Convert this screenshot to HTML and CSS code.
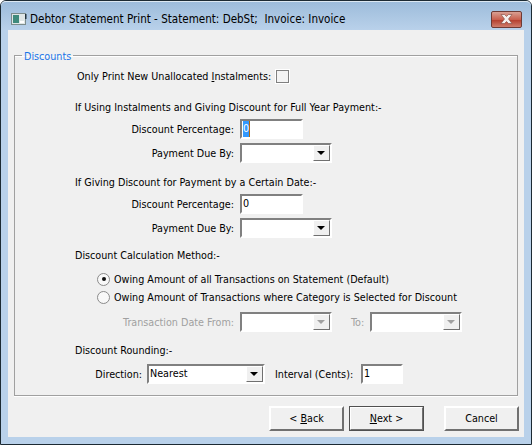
FILE: index.html
```html
<!DOCTYPE html>
<html lang="en">
<head>
    <meta charset="UTF-8">
    <title>Debtor Statement Print</title>
    <link rel="stylesheet" href="styles.css">
</head>
<body>
    <div class="window">
        <div class="titlebar">
            <svg class="app-icon" width="16" height="13" viewBox="0 0 16 13">
                <rect x="0.5" y="0.5" width="14" height="11" fill="#dfe6e6" stroke="#7c8c8c"/>
                <rect x="2" y="2" width="6" height="8" fill="#3f8a7c"/>
                <rect x="9" y="8" width="4" height="2" fill="#ffffff"/>
                <rect x="14" y="1" width="1.500" height="5" fill="#24343e"/>
            </svg>
            <span class="title">Debtor Statement Print - Statement: DebSt;&nbsp; Invoice: Invoice</span>
            <div class="close">
                <svg width="15" height="10" viewBox="0 0 15 10">
                    <path d="M2 0.500h3.500l2 2l2-2h3.500l-3.500 4.500l3.500 4.500h-3.500l-2-2l-2 2h-3.500l3.500-4.500z" fill="#f4f0ee" stroke="#80483e" stroke-width="0.6"/>
                </svg>
            </div>
        </div>
        <div class="content">
            <fieldset class="group">
                <legend>Discounts</legend>

                <div class="row only-new">
                    <span class="only-label">Only Print New Unallocated <u>I</u>nstalments:</span>
                    <span class="checkbox"></span>
                </div>

                <div class="heading first">If Using Instalments and Giving Discount for Full Year Payment:-</div>
                <div class="row">
                    <label class="label">Discount Percentage:</label>
                    <div class="input pct"><span class="selected">0</span></div>
                </div>
                <div class="row">
                    <label class="label">Payment Due By:</label>
                    <div class="select date"><span class="arrow"></span></div>
                </div>

                <div class="heading">If Giving Discount for Payment by a Certain Date:-</div>
                <div class="row">
                    <label class="label">Discount Percentage:</label>
                    <div class="input pct">0</div>
                </div>
                <div class="row">
                    <label class="label">Payment Due By:</label>
                    <div class="select date"><span class="arrow"></span></div>
                </div>

                <div class="heading calc">Discount Calculation Method:-</div>
                <div class="radio-row first-radio">
                    <span class="radio checked"></span>
                    <span>Owing Amount of all Transactions on Statement (Default)</span>
                </div>
                <div class="radio-row">
                    <span class="radio"></span>
                    <span>Owing Amount of Transactions where Category is Selected for Discount</span>
                </div>
                <div class="row disabled-row">
                    <label class="label">Transaction Date From:</label>
                    <div class="select date disabled"><span class="arrow"></span></div>
                    <label class="to-label">To:</label>
                    <div class="select date disabled"><span class="arrow"></span></div>
                </div>

                <div class="heading rounding">Discount Rounding:-</div>
                <div class="row direction">
                    <label class="dir-label">Direction:</label>
                    <div class="select dir">Nearest<span class="arrow"></span></div>
                    <label class="int-label">Interval (Cents):</label>
                    <div class="input cents">1</div>
                </div>
            </fieldset>

            <div class="buttons">
                <button class="btn">&lt; <u>B</u>ack</button>
                <button class="btn default"><u>N</u>ext &gt;</button>
                <button class="btn cancel">Cancel</button>
            </div>
        </div>
    </div>
</body>
</html>
```

FILE: styles.css
```css
html, body {
    margin: 0;
    padding: 0;
    background: #ffffff;
}
body {
    font-family: "DejaVu Sans Condensed", "DejaVu Sans", sans-serif;
    font-size: 10.7px;
    color: #000000;
}
.window {
    width: 532px;
    height: 445px;
    box-sizing: border-box;
    border: 1px solid #1c2a33;
    border-radius: 6px 6px 0 0;
    background: #b9d1ea;
    padding: 0 7px 7px 7px;
    display: flex;
    flex-direction: column;
}
.titlebar {
    height: 29px;
    box-sizing: border-box;
    flex: none;
    margin: 0 -7px;
    padding: 6px 1px 0 10px;
    border-top: 1px solid #dce8f2;
    border-radius: 5px 5px 0 0;
    background: linear-gradient(to bottom, #9dbcdb, #b9d1ea);
    display: flex;
    align-items: center;
}
.app-icon {
    margin-right: 3px;
}
.title {
    flex: 1;
    white-space: nowrap;
    font-size: 11.55px;
}
.close {
    width: 29px;
    height: 15px;
    margin-right: 8px;
    border: 1px solid #6e3a34;
    border-radius: 2px;
    background: linear-gradient(to bottom, #d9a093, #c9604e 50%, #b5402f 55%, #cf7d6c);
    display: flex;
    align-items: center;
    justify-content: center;
}
.content {
    flex: 1;
    background: #f0f0f0;
    padding: 0 6px;
    display: flex;
    flex-direction: column;
}
.group {
    margin: 18px 0 0 0;
    padding: 0;
    height: 348px;
    box-sizing: border-box;
    border: 1px solid #a0a0a0;
    box-shadow: 0 1px 0 #ffffff, inset 0 1px 0 #ffffff;
}
legend {
    margin-left: 7px;
    padding: 2px 2px 0 2px;
    line-height: 13px;
    color: #1a74e8;
}
.row {
    display: flex;
    align-items: center;
    height: 20px;
    margin-top: 4px;
}
.label {
    width: 219px;
    margin-right: 6px;
    text-align: right;
    white-space: nowrap;
}
.heading {
    margin: 12px 0 3px 60px;
    height: 15px;
    line-height: 15px;
}
.heading.first {
    margin-top: 17px;
}
.heading.calc {
    margin-top: 10px;
    margin-bottom: 0;
}
.heading.rounding {
    margin-top: 11px;
    margin-bottom: 0;
}
.only-new {
    margin-top: 7px;
    height: 13px;
}
.only-label {
    margin-left: 62px;
    width: 199px;
    white-space: nowrap;
}
.checkbox {
    width: 11px;
    height: 11px;
    border: 1px solid #808080;
    box-shadow: 0 0 0 1px #ffffff;
    background: #f4f4f4;
}
.input, .select {
    box-sizing: border-box;
    height: 20px;
    background: #ffffff;
    border: 2px solid;
    border-color: #808080 #ffffff #ffffff #808080;
    position: relative;
    line-height: 16px;
    padding-left: 1px;
}
.pct {
    width: 63px;
}
.selected {
    display: inline-block;
    width: 6px;
    text-align: center;
    background: #3399ff;
    border-right: 1px solid #b06a10;
    color: #ffffff;
}
.date {
    width: 92px;
}
.dir {
    width: 118px;
}
.cents {
    width: 42px;
}
.arrow {
    position: absolute;
    top: 0;
    right: 0;
    width: 17px;
    height: 16px;
    box-sizing: border-box;
    background: #f0f0f0;
    border: 1px solid;
    border-color: #ffffff #707070 #707070 #ffffff;
}
.arrow::after {
    content: "";
    position: absolute;
    left: 3px;
    top: 5px;
    border-style: solid;
    border-width: 4px 4px 0 4px;
    border-color: #000000 transparent transparent transparent;
}
.disabled .arrow::after {
    border-top-color: #a0a0a0;
}
.radio-row {
    display: flex;
    align-items: center;
    height: 18px;
    margin-left: 82px;
}
.first-radio {
    margin-top: 7px;
}
.radio {
    width: 11px;
    height: 11px;
    margin-right: 4px;
    border: 1px solid #8a8a8a;
    border-radius: 50%;
    background: #f8f8f8;
    position: relative;
}
.radio.checked::after {
    content: "";
    position: absolute;
    left: 3.500px;
    top: 3.500px;
    width: 4px;
    height: 4px;
    border-radius: 50%;
    background: #111111;
}
.disabled-row {
    margin-top: 6px;
    color: #a0a0a0;
}
.to-label {
    width: 15px;
    margin-left: 19px;
    margin-right: 4px;
}
.direction {
    margin-top: 6px;
}
.dir-label {
    width: 127px;
    margin-right: 5px;
    text-align: right;
}
.int-label {
    width: 82px;
    margin-left: 10px;
    margin-right: 4px;
    white-space: nowrap;
}
.buttons {
    display: flex;
    justify-content: flex-end;
    margin-top: 10px;
    margin-right: -1px;
}
.btn {
    width: 75px;
    height: 25px;
    margin-left: 5px;
    padding: 0;
    font: inherit;
    color: #000000;
    background: #f0f0f0;
    border: 2px solid;
    border-color: #ffffff #707070 #707070 #ffffff;
}
.btn.default {
    outline: 1px solid #505050;
    outline-offset: -1px;
}
.btn.cancel {
    margin-left: 20px;
}
```
